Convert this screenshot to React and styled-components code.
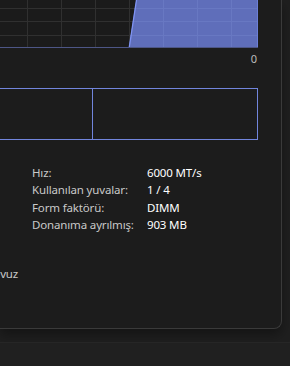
import React from 'react';
import styled, { createGlobalStyle } from 'styled-components';

const GlobalStyle = createGlobalStyle`
  html, body {
    margin: 0;
    padding: 0;
    background: #202020;
  }
  body {
    font-family: "Noto Sans", "Open Sans", sans-serif;
  }
`;

const stats = [
  { label: 'Hız:', value: '6000 MT/s' },
  { label: 'Kullanılan yuvalar:', value: '1 / 4' },
  { label: 'Form faktörü:', value: 'DIMM' },
  { label: 'Donanıma ayrılmış:', value: '903 MB' },
];

const gridX = [27, 61, 95, 129, 163, 197, 231];
const gridY = [8, 21, 35];

const UsageChart = () => (
  <svg width="258" height="48" viewBox="0 0 258 48" style={{ display: 'block' }}>
    <rect x="0" y="0" width="258" height="48" fill="#1b1b1b" />
    {gridX.map((x) => (
      <line key={x} x1={x + 0.5} y1="0" x2={x + 0.5} y2="47" stroke="#303030" strokeWidth="1" />
    ))}
    {gridY.map((y) => (
      <line key={y} x1="0" y1={y + 0.5} x2="258" y2={y + 0.5} stroke="#303030" strokeWidth="1" />
    ))}
    <polygon points="129,47 136.2,0 257.5,0 257.5,47" fill="#5f6eba" />
    {gridX.filter((x) => x > 135).map((x) => (
      <line key={'f' + x} x1={x + 0.5} y1="0" x2={x + 0.5} y2="47" stroke="#6878c2" strokeWidth="1" />
    ))}
    {gridY.map((y) => (
      <line key={'fy' + y} x1={136 - (y / 47) * 7} y1={y + 0.5} x2="257" y2={y + 0.5} stroke="#6878c2" strokeWidth="1" />
    ))}
    <line x1="129.3" y1="47" x2="136.5" y2="0" stroke="#7f93f2" strokeWidth="1.3" />
    <line x1="257.5" y1="0" x2="257.5" y2="47" stroke="#6c7fd6" strokeWidth="1" />
    <line x1="0" y1="47.5" x2="258" y2="47.5" stroke="#4d5686" strokeWidth="1" />
  </svg>
);

const App = () => (
  <>
    <GlobalStyle />
    <Page>
      <Window>
        <ChartArea>
          <UsageChart />
          <AxisLabel>0</AxisLabel>
        </ChartArea>
        <Composition>
          <Segment $width={93} />
          <Segment $grow />
        </Composition>
        <StatsTable>
          {stats.map((s) => (
            <StatRow key={s.label}>
              <StatLabel>{s.label}</StatLabel>
              <StatValue>{s.value}</StatValue>
            </StatRow>
          ))}
        </StatsTable>
        <PoolLabel>Sayfalanmamış havuz</PoolLabel>
      </Window>
      <Footer />
    </Page>
  </>
);

const Page = styled.div`
  width: 290px;
  height: 366px;
  overflow: hidden;
  background: #1f1f1f;
`;

const Window = styled.div`
  width: 282px;
  height: 329px;
  box-sizing: border-box;
  background: #1c1c1c;
  border-right: 1px solid #3a3a3a;
  border-bottom: 1px solid #3a3a3a;
  border-bottom-right-radius: 8px;
  box-shadow: 0 6px 12px rgba(0, 0, 0, 0.35);
  overflow: hidden;
  display: flex;
  flex-direction: column;
`;

const ChartArea = styled.div`
  width: 258px;
  display: flex;
  flex-direction: column;
  align-items: flex-end;
`;

const AxisLabel = styled.div`
  margin-top: 4px;
  font-size: 11px;
  line-height: 13px;
  color: #bdbdbd;
  padding-right: 1px;
`;

const Composition = styled.div`
  margin-top: 23px;
  margin-left: -2px;
  width: 260px;
  height: 52px;
  box-sizing: border-box;
  border: 1px solid #7185dc;
  display: flex;
`;

const Segment = styled.div`
  width: ${(p) => (p.$width ? `${p.$width}px` : 'auto')};
  flex: ${(p) => (p.$grow ? '1' : 'none')};
  box-sizing: border-box;
  & + & {
    border-left: 1px solid #7185dc;
  }
`;

const StatsTable = styled.div`
  margin-top: 24px;
  padding-left: 32px;
  display: flex;
  flex-direction: column;
`;

const StatRow = styled.div`
  display: grid;
  grid-template-columns: 115px 1fr;
  font-size: 11.5px;
  letter-spacing: -0.15px;
  line-height: 17.3px;
`;

const StatLabel = styled.span`
  color: #c9c9c9;
`;

const StatValue = styled.span`
  color: #ffffff;
`;

const PoolLabel = styled.div`
  margin-top: 33px;
  margin-left: -96px;
  font-size: 11.5px;
  letter-spacing: -0.15px;
  line-height: 16px;
  color: #c9c9c9;
  white-space: nowrap;
`;

const Footer = styled.div`
  height: 24px;
  margin-top: 13px;
  border-top: 1px solid #262626;
  background: #202020;
`;

export default App;
